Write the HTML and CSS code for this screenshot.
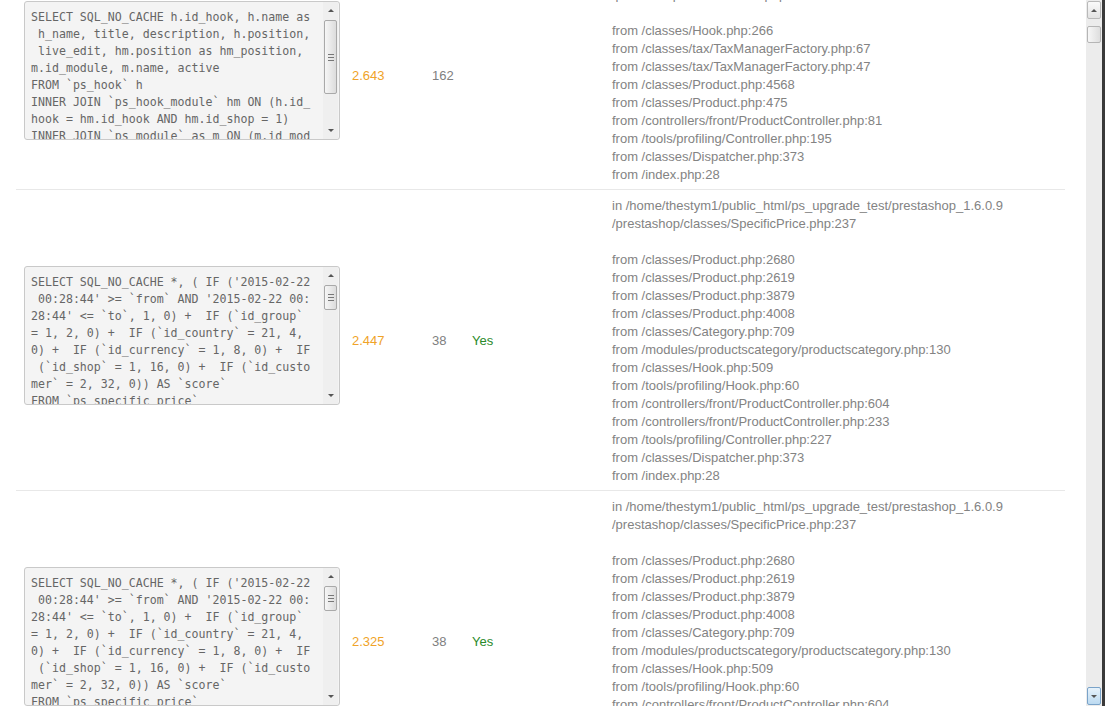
FILE: index.html
```html
<!DOCTYPE html>
<html lang="en">
  <head>
    <meta charset="UTF-8" />
    <meta name="viewport" content="width=device-width, initial-scale=1.0" />
    <title>SQL Queries - Profiling</title>
    <link rel="stylesheet" href="styles.css">
  </head>
  <body>
    <div class="page">
      <main class="content">
        <div class="rows">
          <div class="row">
            <div class="cell">
              <div class="sql-box">
                <div class="sql-text">SELECT SQL_NO_CACHE h.id_hook, h.name as
 h_name, title, description, h.position,
 live_edit, hm.position as hm_position,
m.id_module, m.name, active
FROM `ps_hook` h
INNER JOIN `ps_hook_module` hm ON (h.id_
hook = hm.id_hook AND hm.id_shop = 1)
INNER JOIN `ps_module` as m ON (m.id_mod
ule = hm.id_module)</div>
                <div class="sb">
                  <div class="sb-btn"><span class="arr-up"></span></div>
                  <div class="sb-track">
                    <div class="sb-thumb tall"><span class="grip"></span></div>
                  </div>
                  <div class="sb-btn"><span class="arr-down"></span></div>
                </div>
              </div>
            </div>
            <div class="cell time">2.643</div>
            <div class="cell count">162</div>
            <div class="cell yes"></div>
            <div class="cell stack">in /home/thestym1/public_html/ps_upgrade_test/prestashop_1.6.0.9
/prestashop/classes/Hook.php:298

from /classes/Hook.php:266
from /classes/tax/TaxManagerFactory.php:67
from /classes/tax/TaxManagerFactory.php:47
from /classes/Product.php:4568
from /classes/Product.php:475
from /controllers/front/ProductController.php:81
from /tools/profiling/Controller.php:195
from /classes/Dispatcher.php:373
from /index.php:28</div>
          </div>

          <div class="row">
            <div class="cell">
              <div class="sql-box">
                <div class="sql-text">SELECT SQL_NO_CACHE *, ( IF ('2015-02-22
 00:28:44' >= `from` AND '2015-02-22 00:
28:44' <= `to`, 1, 0) +  IF (`id_group`
= 1, 2, 0) +  IF (`id_country` = 21, 4,
0) +  IF (`id_currency` = 1, 8, 0) +  IF
 (`id_shop` = 1, 16, 0) +  IF (`id_custo
mer` = 2, 32, 0)) AS `score`
FROM `ps_specific_price`
WHERE `id_product` IN (0, 7)</div>
                <div class="sb">
                  <div class="sb-btn"><span class="arr-up"></span></div>
                  <div class="sb-track">
                    <div class="sb-thumb"><span class="grip"></span></div>
                  </div>
                  <div class="sb-btn"><span class="arr-down"></span></div>
                </div>
              </div>
            </div>
            <div class="cell time">2.447</div>
            <div class="cell count">38</div>
            <div class="cell yes">Yes</div>
            <div class="cell stack">in /home/thestym1/public_html/ps_upgrade_test/prestashop_1.6.0.9
/prestashop/classes/SpecificPrice.php:237

from /classes/Product.php:2680
from /classes/Product.php:2619
from /classes/Product.php:3879
from /classes/Product.php:4008
from /classes/Category.php:709
from /modules/productscategory/productscategory.php:130
from /classes/Hook.php:509
from /tools/profiling/Hook.php:60
from /controllers/front/ProductController.php:604
from /controllers/front/ProductController.php:233
from /tools/profiling/Controller.php:227
from /classes/Dispatcher.php:373
from /index.php:28</div>
          </div>

          <div class="row">
            <div class="cell">
              <div class="sql-box">
                <div class="sql-text">SELECT SQL_NO_CACHE *, ( IF ('2015-02-22
 00:28:44' >= `from` AND '2015-02-22 00:
28:44' <= `to`, 1, 0) +  IF (`id_group`
= 1, 2, 0) +  IF (`id_country` = 21, 4,
0) +  IF (`id_currency` = 1, 8, 0) +  IF
 (`id_shop` = 1, 16, 0) +  IF (`id_custo
mer` = 2, 32, 0)) AS `score`
FROM `ps_specific_price`
WHERE `id_product` IN (0, 6)</div>
                <div class="sb">
                  <div class="sb-btn"><span class="arr-up"></span></div>
                  <div class="sb-track">
                    <div class="sb-thumb"><span class="grip"></span></div>
                  </div>
                  <div class="sb-btn"><span class="arr-down"></span></div>
                </div>
              </div>
            </div>
            <div class="cell time">2.325</div>
            <div class="cell count">38</div>
            <div class="cell yes">Yes</div>
            <div class="cell stack">in /home/thestym1/public_html/ps_upgrade_test/prestashop_1.6.0.9
/prestashop/classes/SpecificPrice.php:237

from /classes/Product.php:2680
from /classes/Product.php:2619
from /classes/Product.php:3879
from /classes/Product.php:4008
from /classes/Category.php:709
from /modules/productscategory/productscategory.php:130
from /classes/Hook.php:509
from /tools/profiling/Hook.php:60
from /controllers/front/ProductController.php:604
from /controllers/front/ProductController.php:233
from /tools/profiling/Controller.php:227
from /classes/Dispatcher.php:373
from /index.php:28</div>
          </div>
        </div>
      </main>

      <div class="page-sb">
        <div class="page-btn"><span class="arr-up"></span></div>
        <div class="page-track">
          <div class="page-thumb"></div>
        </div>
        <div class="page-btn hover"><span class="arr-down"></span></div>
      </div>
      <div class="edge"></div>
    </div>
  </body>
</html>
```

FILE: styles.css
```css
html,
body {
  margin: 0;
  padding: 0;
  height: 100%;
  overflow: hidden;
  background: #fff;
}

body {
  font-family: "Liberation Sans", Arial, sans-serif;
  font-size: 13px;
  color: #808080;
}

.page {
  display: flex;
  height: 706px;
}

.content {
  flex: 1;
  overflow: hidden;
}

.rows {
  margin: -39px 21px 0 16px;
}

.row {
  display: grid;
  grid-template-columns: 328px 80px 40px 140px 1fr;
  align-items: center;
  border-bottom: 1px solid #e8e8e8;
}

.cell {
  padding: 0 8px;
}

.time {
  color: #f0a328;
}

.count {
  color: #808080;
}

.yes {
  color: #2b8a2b;
}

.stack {
  white-space: pre;
  line-height: 18px;
  padding-top: 7px;
  padding-bottom: 5px;
  color: #838383;
}

/* fake textarea */
.sql-box {
  display: flex;
  width: 314px;
  height: 137px;
  margin-bottom: 9px;
  border: 1px solid #c9c9c9;
  border-radius: 3px;
  background: #f4f4f4;
  overflow: hidden;
}

.sql-text {
  flex: 1;
  padding: 7px 0 0 6px;
  white-space: pre;
  overflow: hidden;
  font-family: "DejaVu Sans Mono", "Liberation Mono", monospace;
  font-size: 11.6px;
  line-height: 17px;
  color: #666;
}

.sb {
  display: flex;
  flex-direction: column;
  width: 15px;
  margin-right: 1px;
  background: #efefef;
}

.sb-btn {
  height: 17px;
  display: flex;
  align-items: center;
  justify-content: center;
}

.sb-track {
  flex: 1;
  padding-top: 1px;
}

.sb-thumb {
  height: 23px;
  margin: 0 1px;
  border: 1px solid #a9a9a9;
  border-radius: 2px;
  background: linear-gradient(to right, #f6f6f6, #dcdcdc);
  display: flex;
  align-items: center;
  justify-content: center;
}

.sb-thumb.tall {
  height: 72px;
}

.grip {
  width: 6px;
  height: 5px;
  border-top: 1px solid #777;
  border-bottom: 1px solid #777;
  position: relative;
}

.grip::after {
  content: "";
  position: absolute;
  left: 0;
  right: 0;
  top: 2px;
  border-top: 1px solid #777;
}

.arr-up,
.arr-down {
  width: 0;
  height: 0;
  border-left: 3px solid transparent;
  border-right: 3px solid transparent;
}

.arr-up {
  border-bottom: 3px solid #555;
}

.arr-down {
  border-top: 3px solid #555;
}

/* window scrollbar */
.page-sb {
  display: flex;
  flex-direction: column;
  width: 16px;
  background: #ececec;
}

.page-btn {
  height: 16px;
  margin: 1px 1px 0 1px;
  border: 1px solid #b9b9b9;
  border-radius: 2px;
  background: linear-gradient(#fafafa, #e2e2e2);
  display: flex;
  align-items: center;
  justify-content: center;
}

.page-btn.hover {
  margin: 0 1px 1px 1px;
  border-color: #7aa3c9;
  background: linear-gradient(#e7f2fb, #bcdaf1);
}

.page-track {
  flex: 1;
  padding-top: 7px;
}

.page-thumb {
  height: 15px;
  margin: 0 1px;
  border: 1px solid #b5b5b5;
  border-radius: 2px;
  background: linear-gradient(to right, #f7f7f7, #dedede);
}

.edge {
  width: 3px;
  background: #3a3a3a;
}
```
